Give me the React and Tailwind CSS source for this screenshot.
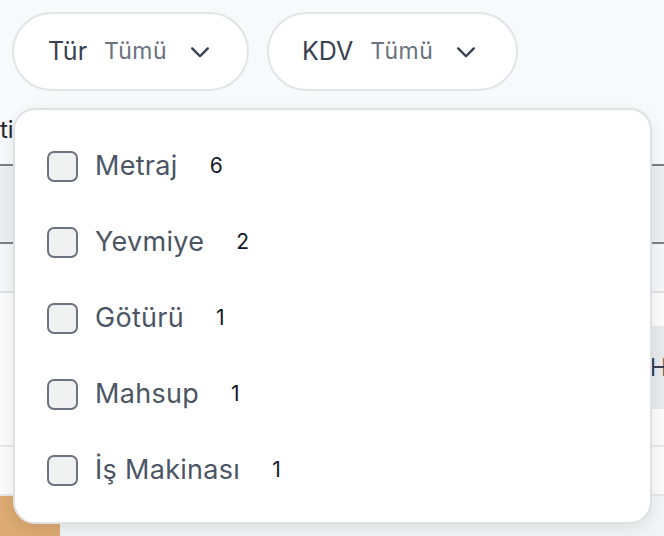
import React from 'react';

const items = [
  { label: 'Metraj', count: 6 },
  { label: 'Yevmiye', count: 2 },
  { label: 'Götürü', count: 1 },
  { label: 'Mahsup', count: 1 },
  { label: 'İş Makinası', count: 1 },
];

const Chevron = () => (
  <svg width="34" height="34" viewBox="0 0 24 24" fill="none" stroke="#374151" strokeWidth="1.7" strokeLinecap="round" strokeLinejoin="round">
    <path d="M6.5 9.5l5.5 5.5 5.5-5.5" />
  </svg>
);

const FilterPill = ({ name, value, className }) => (
  <button className={`h-[79px] rounded-full border-2 border-[#e3e4e7] bg-white flex items-center ${className}`}>
    <span className="text-[25px] text-[#374151]">{name}</span>
    <span className="ml-[17px] text-[23px] text-[#6b7280] tracking-[0.5px]">{value}</span>
    <span className="ml-[16px] flex items-center"><Chevron /></span>
  </button>
);

export default function App() {
  return (
    <div className="relative w-[664px] h-[536px] overflow-hidden bg-[#f8f9fa]" style={{ fontFamily: 'Inter, "Noto Sans", sans-serif' }}>
      <div className="flex gap-[18px] px-[12px] pt-[12px]">
        <FilterPill name="Tür" value="Tümü" className="w-[237px] pl-[34px]" />
        <FilterPill name="KDV" value="Tümü" className="w-[251px] pl-[33px]" />
      </div>

      {/* table behind the menu */}
      <div className="mt-[17px] flex flex-col">
        <div className="h-[56px] flex items-start text-[24px] text-[#1f2937]">
          <span className="pt-[4px]">tip</span>
        </div>
        <div className="h-[80px] bg-[#eceef1] border-y-2 border-[#7b7f86]"></div>
        <div className="h-[49px] bg-[#f5f6f7] border-b-2 border-[#dfe1e4]"></div>
        <div className="h-[154px] bg-[#fbfbfc] border-b-2 border-[#e5e7ea] flex flex-col">
          <div className="h-[33px]"></div>
          <div className="h-[83px] flex justify-end">
            <div className="w-[40px] bg-[#e7e9ec] flex items-center pl-[8px] text-[24px] text-[#374151]">HH</div>
          </div>
        </div>
        <div className="h-[49px] bg-[#fbfbfc] border-b-2 border-[#e5e7ea]"></div>
        <div className="h-[40px] bg-[#f3f4f5] flex">
          <div className="w-[60px] bg-[#dcaa72]"></div>
        </div>
      </div>

      {/* dropdown menu */}
      <div className="absolute left-[13px] top-[108px] w-[639px] h-[416px] rounded-[22px] border-2 border-[#dfe0e3] bg-white shadow-[0_6px_16px_rgba(0,0,0,0.08)] pt-[18px] pl-[32px]">
        {items.map((it) => (
          <label key={it.label} className="h-[76px] flex items-center">
            <span className="w-[31px] h-[31px] rounded-[7px] border-2 border-[#6b7280] bg-[#f0f1f3]"></span>
            <span className="ml-[17px] text-[27px] text-[#4b5563] tracking-[0.3px]">{it.label}</span>
            <span className="ml-[32px] text-[21px] text-[#111827]">{it.count}</span>
          </label>
        ))}
      </div>
    </div>
  );
}
